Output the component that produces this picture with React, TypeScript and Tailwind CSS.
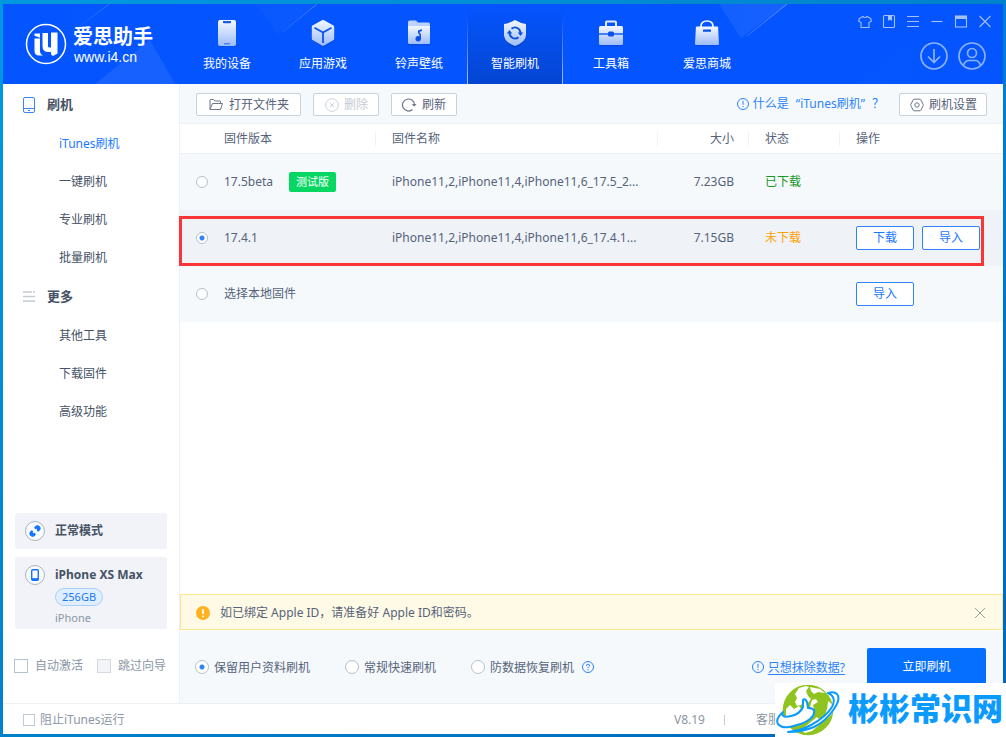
import React from "react";

type NavItem = { label: string; icon: React.ReactNode; active?: boolean };

function Gradient({ id }: { id: string }) {
  return (
    <linearGradient id={id} x1="0" y1="0" x2="0" y2="1">
      <stop offset="0" stopColor="#f4f8ff" />
      <stop offset="1" stopColor="#9dbcf9" />
    </linearGradient>
  );
}

const NAV: NavItem[] = [
  {
    label: "我的设备",
    icon: (
      <svg width="28" height="30" viewBox="0 0 28 30">
        <defs><Gradient id="g1" /></defs>
        <rect x="5.5" y="4" width="17" height="25" rx="2" fill="#0846cf" opacity=".5" />
        <rect x="5" y="2" width="18" height="26" rx="2" fill="url(#g1)" />
        <path d="M10 3h8v1.2l-1 1h-6l-1-1z" fill="#1a5ae8" />
        <rect x="11" y="25" width="6" height="1.5" fill="#4c82f2" />
      </svg>
    ),
  },
  {
    label: "应用游戏",
    icon: (
      <svg width="28" height="30" viewBox="0 0 28 30">
        <defs><Gradient id="g2" /></defs>
        <path d="M14 3.5 25.5 10v12L14 29.5 2.5 22V10z" fill="#0846cf" opacity=".5" />
        <path d="M15 2.2 24.5 7.500q.7.400.7 1.200v12q0 .8-.7 1.200L15 27.500q-1 .5-2 0L3.500 21.900q-.7-.4-.7-1.200v-12q0-.8.7-1.200L13 2.200q1-.5 2 0z" fill="url(#g2)" />
        <path d="M5.500 9.800 14 14.500l8.500-4.700M14 14.500V25" fill="none" stroke="#0b55ee" strokeWidth="1.8" />
      </svg>
    ),
  },
  {
    label: "铃声壁纸",
    icon: (
      <svg width="28" height="30" viewBox="0 0 28 30">
        <defs><Gradient id="g3" /></defs>
        <rect x="3" y="9" width="22" height="19" rx="1.5" fill="#0846cf" opacity=".5" />
        <path d="M3 7V4q0-1.500 1.500-1.500H11l2 2h10.500Q25 4.500 25 6v2H3z" fill="#bcd1fd" />
        <path d="M3 8h22v16.500q0 1.500-1.500 1.500h-19Q3 26 3 24.500z" fill="url(#g3)" />
        <circle cx="13.2" cy="20.800" r="2.700" fill="#0b50e6" />
        <path d="M15.200 21v-4.500q-2-2-1.500-3.500 2.500 0 2.800-1.500" fill="none" stroke="#0b50e6" strokeWidth="1.6" />
      </svg>
    ),
  },
  {
    label: "智能刷机",
    active: true,
    icon: (
      <svg width="28" height="30" viewBox="0 0 28 30">
        <defs><Gradient id="g4" /></defs>
        <path d="M14 4 25 8v10q0 7-11 12Q3 25 3 18V8z" fill="#0538ab" opacity=".5" />
        <path d="M14 2q5 3 11 4v11q0 7-11 11Q3 24 3 17V6q6-1 11-4z" fill="url(#g4)" />
        <path d="M10.500 10.800A5.400 5.400 0 0 1 19.400 15M17.500 19.200A5.400 5.400 0 0 1 8.600 15" fill="none" stroke="#0b4fde" strokeWidth="1.8" />
        <path d="M16.800 14.500h5.400l-2.700 3.400zM5.800 15.500h5.400l-2.700-3.400z" fill="#0b4fde" />
      </svg>
    ),
  },
  {
    label: "工具箱",
    icon: (
      <svg width="28" height="30" viewBox="0 0 28 30">
        <defs><Gradient id="g5" /></defs>
        <rect x="2" y="10" width="24" height="18.500" rx="1.5" fill="#0846cf" opacity=".5" />
        <path d="M9 8V4.500Q9 3.500 10 3.500h8q1 0 1 1V8" fill="none" stroke="#e4edff" strokeWidth="2" />
        <rect x="2" y="8" width="24" height="19" rx="1.5" fill="url(#g5)" />
        <path d="M2 16h24" stroke="#0b55ee" strokeWidth="1.4" />
        <rect x="11" y="13.500" width="6" height="5" rx="1.500" fill="#0b50e6" />
      </svg>
    ),
  },
  {
    label: "爱思商城",
    icon: (
      <svg width="28" height="30" viewBox="0 0 28 30">
        <defs><Gradient id="g6" /></defs>
        <path d="M2.500 11h23v17h-23z" fill="#0846cf" opacity=".5" />
        <path d="M8 10V8.500q0-5.500 6-5.500t6 5.500V10" fill="none" stroke="#f0f5ff" strokeWidth="1.700" />
        <path d="M4 8.500h20q1 0 1.100 1L26 25.500q0 1.500-1.500 1.500h-21Q2 27 2 25.500L2.900 9.500Q3 8.500 4 8.500z" fill="url(#g6)" />
        <rect x="10" y="11.500" width="8" height="2.200" rx=".5" fill="#0b50e6" />
      </svg>
    ),
  },
];

function Logo() {
  return (
    <a href="#" className="flex items-center gap-[6px] text-white">
      <svg width="42" height="42" viewBox="0 0 42 42">
        <circle cx="21" cy="21" r="19.500" fill="none" stroke="#fff" strokeWidth="1.500" />
        <path d="M9.500 10.500H15v4.200l-5.500-2zM9.500 15.500H15V28q0 3 3 4.500h-4q-4.500 0-4.500-5z" fill="#fff" />
        <path d="M17.500 10H23v13q0 1.500 1.500 1.500h1.500V9.500h6.500v21L28 33l-2-1.500V29h-2.500q-6 0-6-6z" fill="#fff" />
      </svg>
      <span className="flex flex-col gap-[3px] pt-[2px]">
        <span className="text-[20px] leading-[20px] font-bold">爱思助手</span>
        <span className="pl-px font-['Liberation_Sans',sans-serif] text-[14px] leading-[14px]">www.i4.cn</span>
      </span>
    </a>
  );
}

const WINDOW_CONTROLS: { label: string; drawing: React.ReactNode }[] = [
  { label: "皮肤", drawing: <path d="M5 2.500 1.200 4.500.8 7.500l2.200.8v5.200h8V8.300l2.200-.8-.4-3L9 2.500Q7 4.500 5 2.500z" /> },
  { label: "便签", drawing: <><rect x="1.500" y="1.500" width="11" height="12" rx="1" /><path d="M6.500 2v4l1.500-1 1.500 1V2z" fill="#b5cdff" /></> },
  { label: "菜单", drawing: <path d="M1 2.500h12M1 7.500h12M1 12.500h12" /> },
  { label: "最小化", drawing: <path d="M1.500 7.500h11" /> },
  { label: "最大化", drawing: <><rect x="1.500" y="2" width="11" height="11" /><path d="M1.500 3.500h11" strokeWidth="3" /></> },
  { label: "关闭", drawing: <path d="m1.500 2 11 11m0-11-11 11" /> },
];

function Header() {
  return (
    <header className="relative flex h-20 shrink-0 overflow-hidden bg-[#0455ff] text-white">
      <svg className="absolute inset-0 h-full w-full" aria-hidden="true">
        <defs>
          <linearGradient id="ray" x1="0" x2="1">
            <stop offset="0" stopColor="#fff" stopOpacity="0" />
            <stop offset="1" stopColor="#fff" stopOpacity=".07" />
          </linearGradient>
          <linearGradient id="ray2" x1="0" x2="1">
            <stop offset="0" stopColor="#fff" stopOpacity=".08" />
            <stop offset="1" stopColor="#fff" stopOpacity="0" />
          </linearGradient>
          <linearGradient id="edge" x1="1" y1="0" x2="0" y2="1">
            <stop offset="0" stopColor="#7ba6ff" stopOpacity=".8" />
            <stop offset="1" stopColor="#7ba6ff" stopOpacity="0" />
          </linearGradient>
        </defs>
        <path d="M36 0h70L66 31zM252 0h62l-38 31zM716 0h68l-46 34z" fill="url(#ray)" />
        <path d="M92 80 147 36 172 80zM855 80l52-44 40 44z" fill="url(#ray2)" />
        <path d="M106 0 72 26M314 0l-34 28M784 0l-40 32" stroke="url(#edge)" />
      </svg>
      <div className="relative flex w-44 items-center pl-[22px]"><Logo /></div>
      <nav className="relative flex">
        {NAV.map((item) => (
          <a
            key={item.label}
            href="#"
            className={
              item.active
                ? "flex w-24 flex-col items-center gap-[6px] border-x border-[#7ba5ff] bg-linear-to-b from-[#0455ff] to-[#0446d2] pt-[14px] text-xs leading-5 [border-image:linear-gradient(to_bottom,transparent_15%,#a9c5ff)_1]"
                : "flex w-24 flex-col items-center gap-[6px] pt-[14px] text-xs leading-5"
            }
          >
            {item.icon}
            {item.label}
          </a>
        ))}
      </nav>
      <div className="relative ml-auto flex flex-col items-end gap-[13px] pt-[10px]">
        <div className="flex gap-[10px] pr-[11px]">
          {WINDOW_CONTROLS.map((c) => (
            <button key={c.label} aria-label={c.label}>
              <svg className="block" width="14" height="15" viewBox="0 0 14 15" fill="none" stroke="#a3c0ff" strokeWidth="1.1">{c.drawing}</svg>
            </button>
          ))}
        </div>
        <div className="flex gap-[10px] pr-[17px]">
          <button aria-label="下载">
            <svg className="block" width="28" height="28" viewBox="0 0 28 28" fill="none" stroke="#8db2ff" strokeWidth="1.7">
              <circle cx="14" cy="14" r="13" /><path d="M14 7v13M8 14.500l6 6 6-6" />
            </svg>
          </button>
          <button aria-label="账户">
            <svg className="block" width="28" height="28" viewBox="0 0 28 28" fill="none" stroke="#8db2ff" strokeWidth="1.7">
              <circle cx="14" cy="14" r="13" /><circle cx="14" cy="11" r="4.500" /><path d="M5.500 23q2-4.500 5-4.500h7q3 0 5 4.500" />
            </svg>
          </button>
        </div>
      </div>
    </header>
  );
}

function SideGroup({ title, icon, items, current }: { title: string; icon: React.ReactNode; items: string[]; current?: string }) {
  return (
    <section>
      <h2 className="flex h-10 items-center gap-[11px] pl-[19px] text-[13px] font-bold text-[#465266]">{icon}{title}</h2>
      <ul>
        {items.map((item) => (
          <li key={item}>
            <a
              href="#"
              className={item === current ? "flex h-[38px] items-center pl-14 text-[#1a78ff]" : "flex h-[38px] items-center pl-14 text-[#465266]"}
            >
              {item}
            </a>
          </li>
        ))}
      </ul>
    </section>
  );
}

function Check({ label, small, disabled }: { label: string; small?: boolean; disabled?: boolean }) {
  return (
    <label className={small ? "flex items-center gap-[5px] text-[#8b96a6]" : "flex items-center gap-[7px] text-[#8b96a6]"}>
      <input
        type="checkbox"
        disabled={disabled}
        className={
          small
            ? "size-3 appearance-none border border-[#c0cad6] bg-white checked:bg-[#1a78ff]"
            : "size-[14px] appearance-none border border-[#b4c3d4] bg-white checked:bg-[#1a78ff] disabled:border-[#d5d9df] disabled:bg-[#f3f4f7]"
        }
      />
      {label}
    </label>
  );
}

function Sidebar() {
  return (
    <aside className="flex w-[177px] shrink-0 flex-col border-r border-[#edf0f4] bg-white pt-px">
      <SideGroup
        title="刷机"
        current="iTunes刷机"
        items={["iTunes刷机", "一键刷机", "专业刷机", "批量刷机"]}
        icon={
          <svg width="14" height="16" viewBox="0 0 14 16" fill="none" stroke="#3a86f7">
            <rect x="1.500" y=".5" width="11" height="15" rx="1.500" /><path d="M1.500 11.500h11M6 13.500h2" />
          </svg>
        }
      />
      <SideGroup
        title="更多"
        items={["其他工具", "下载固件", "高级功能"]}
        icon={
          <svg width="14" height="16" viewBox="0 0 14 16" stroke="#c5ccd5" strokeWidth="1.5">
            <path d="M1 3h9M11 3h2M1 7.500h12M1 12h12" />
          </svg>
        }
      />
      <div className="mt-auto flex flex-col gap-2 px-3 pb-7">
        <div className="flex h-9 items-center gap-[10px] rounded-[3px] bg-[#f2f3f8] pl-[10px] font-bold text-[#465266]">
          <svg width="20" height="20" viewBox="0 0 20 20" fill="none">
            <circle cx="10" cy="10" r="9.500" fill="#fafbfd" stroke="#a9b4c2" />
            <path d="M9.800 6.700q2.200-3.200 4.400-1t-1 4.400zM10.200 13.300q-2.200 3.200-4.400 1t1-4.400z" fill="#1474ff" stroke="#1474ff" strokeWidth="1.200" strokeLinejoin="round" />
            <path d="m8.200 11.800.9-.9M10.900 9.100l.9-.9" stroke="#fafbfd" strokeWidth="1.600" />
          </svg>
          正常模式
        </div>
        <div className="flex h-[72px] gap-[10px] rounded-[3px] bg-[#f2f3f8] pt-2 pl-[10px]">
          <svg width="20" height="20" viewBox="0 0 20 20" fill="none">
            <circle cx="10" cy="10" r="9.500" fill="#fafbfd" stroke="#a9b4c2" />
            <rect x="6.700" y="4.700" width="6.600" height="10.600" rx="1" stroke="#1474ff" strokeWidth="1.4" />
            <path d="M7 14.200h6" stroke="#1474ff" strokeWidth="2.200" />
          </svg>
          <div className="flex flex-col items-start">
            <strong className="leading-5 text-[#465266]">iPhone XS Max</strong>
            <span className="mt-[3px] flex h-[18px] items-center rounded-full border border-[#a9cffc] bg-[#dfefff] px-[6px] text-[11px] text-[#1a78ff]">256GB</span>
            <span className="mt-1 text-[11px] leading-4 text-[#8b96a6]">iPhone</span>
          </div>
        </div>
      </div>
      <div className="flex justify-between pr-[13px] pb-7 pl-[11px] leading-[18px]">
        <Check label="自动激活" />
        <Check label="跳过向导" disabled />
      </div>
    </aside>
  );
}

const toolButton = "flex h-[23px] items-center rounded-[2px] border border-[#c9d1db] bg-white pt-px text-[#56637a] disabled:text-[#c6ccd4]";

function InfoIcon({ question }: { question?: boolean }) {
  return (
    <svg width="12" height="12" viewBox="0 0 12 12" fill="none" stroke="#2d83f8">
      <circle cx="6" cy="6" r="5.500" />
      {question ? <path d="M4.300 4.800Q4.400 3.200 6 3.200t1.600 1.500Q7.600 5.500 6.600 6 6 6.400 6 7.300M6 8.300v1.200" /> : <path d="M6 2.800v4M6 8v1.200" />}
    </svg>
  );
}

function Toolbar() {
  return (
    <div className="flex h-[39px] shrink-0 items-center gap-3 bg-[#f5f9fc] pt-px pr-4 pl-4">
      <button className={`${toolButton} gap-[6px] pr-[11px] pl-3`}>
        <svg width="14" height="13" viewBox="0 0 14 13" fill="none" stroke="#6b7789">
          <path d="M1 11.500V2q0-.5.500-.5h3l1.500 1.500h5q.5 0 .5.500v2M1 11.500l2.500-6h10l-2 6z" />
        </svg>
        打开文件夹
      </button>
      <button disabled className={`${toolButton} gap-[5px] pr-[10px] pl-[11px]`}>
        <svg width="14" height="14" viewBox="0 0 14 14" fill="none" stroke="#ccd2da"><circle cx="7" cy="7" r="6.300" /><path d="m4.800 4.800 4.400 4.400m0-4.400L4.800 9.200" /></svg>
        删除
      </button>
      <button className={`${toolButton} gap-[5px] pr-[10px] pl-[9px]`}>
        <svg width="16" height="14" viewBox="0 0 16 14" fill="none" stroke="#6b7789" strokeWidth="1.2">
          <path d="M11.500 11.500A6 6 0 1 1 13.500 7" /><path d="M10.800 6h4.700l-2.300 2.800z" fill="#6b7789" stroke="none" />
        </svg>
        刷新
      </button>
      <a href="#" className="ml-auto flex items-center gap-1 pr-[3px] text-[#2d83f8]">
        <InfoIcon />
        <span>什么是<span className="pl-[7px]">“</span>iTunes刷机<span className="pr-[7px]">”</span>？</span>
      </a>
      <button className={`${toolButton} gap-[5px] pr-[9px] pl-[10px]`}>
        <svg width="14" height="14" viewBox="0 0 14 14" fill="none" stroke="#6b7789">
          <path d="M4 1.200h6q.5 0 .8.500L13.200 6.500q.2.500 0 1L10.800 12.300q-.3.500-.8.500H4q-.5 0-.8-.5L.8 7.500q-.2-.5 0-1L3.200 1.700q.3-.5.8-.5z" /><circle cx="7" cy="7" r="2.200" />
        </svg>
        刷机设置
      </button>
    </div>
  );
}

type Firmware = { version: string; beta?: boolean; name: string; size: string; status: string; statusClass: string; actions: string[]; selected?: boolean };

const FIRMWARE: Firmware[] = [
  { version: "17.5beta", beta: true, name: "iPhone11,2,iPhone11,4,iPhone11,6_17.5_2...", size: "7.23GB", status: "已下载", statusClass: "pl-4 text-[#16971f]", actions: [] },
  { version: "17.4.1", name: "iPhone11,2,iPhone11,4,iPhone11,6_17.4.1...", size: "7.15GB", status: "未下载", statusClass: "pl-4 text-[#ffa200]", actions: ["下载", "导入"], selected: true },
  { version: "选择本地固件", name: "", size: "", status: "", statusClass: "", actions: ["导入"] },
];

const radioBase =
  "block appearance-none rounded-full border border-[#b5bfcb] bg-white checked:bg-[radial-gradient(circle,#2d83f8_0_2px,white_3px)]";

function Heading({ children, right }: { children: React.ReactNode; right?: boolean }) {
  return (
    <span className={right ? "flex items-center justify-end border-r border-[#eff2f6] pr-[14px] pl-4 leading-[14px]" : "flex items-center border-r border-[#eff2f6] pl-4 leading-[14px]"}>
      {children}
    </span>
  );
}

function FirmwareTable() {
  return (
    <div className="relative">
      <table className="w-full table-fixed text-left text-[#56637a]">
        <colgroup>
          <col className="w-[44px]" /><col className="w-[152px]" /><col /><col className="w-[91px]" /><col className="w-[91px]" /><col className="w-[163px]" />
        </colgroup>
        <thead>
          <tr className="h-[30px] border-y border-[#edf1f5] bg-white">
            <th className="p-0" />
            <th className="p-0 font-normal"><span className="block border-r border-[#eff2f6] leading-[14px]">固件版本</span></th>
            <th className="p-0 font-normal"><Heading>固件名称</Heading></th>
            <th className="p-0 font-normal"><Heading right>大小</Heading></th>
            <th className="p-0 font-normal"><Heading>状态</Heading></th>
            <th className="p-0 pl-4 font-normal">操作</th>
          </tr>
        </thead>
        <tbody>
          {FIRMWARE.map((f) => (
            <tr key={f.version} className={f.selected ? "h-14 bg-[#eff2f7]" : "h-14 bg-[#f5f9fc]"}>
              <td className="pl-4"><input type="radio" name="firmware" aria-label={f.version} defaultChecked={f.selected} className={`${radioBase} size-3`} /></td>
              <td className="pt-px">
                <span className="flex items-center gap-4">
                  {f.version}
                  {f.beta && <span className="rounded-[2px] bg-[#06d763] px-[7px] text-[11px] leading-5 text-white">测试版</span>}
                </span>
              </td>
              <td className="truncate pt-px pl-4">{f.name}</td>
              <td className="pt-px pr-[15px] text-right">{f.size}</td>
              <td className={`pt-px ${f.statusClass}`}>{f.status}</td>
              <td className="pl-4">
                <span className="flex gap-2">
                  {f.actions.map((a) => (
                    <button key={a} className="h-6 w-[58px] rounded-[2px] border border-[#2d83f8] bg-white pt-px text-[#1a78ff]">{a}</button>
                  ))}
                </span>
              </td>
            </tr>
          ))}
        </tbody>
      </table>
      <div className="pointer-events-none absolute top-[93px] right-[19px] -left-px h-[50px] border-3 border-[#f93535]" />
    </div>
  );
}

function Notice() {
  return (
    <div className="mt-auto flex h-9 shrink-0 items-center gap-[10px] border border-[#ffe48f] bg-[#fffae6] pt-px pr-4 pl-[15px] text-[#56637a]">
      <svg width="14" height="14" viewBox="0 0 14 14"><circle cx="7" cy="7" r="7" fill="#ffb11f" /><path d="M7 3v5M7 9.500v1.700" stroke="#fff" strokeWidth="1.8" /></svg>
      如已绑定 Apple ID，请准备好 Apple ID和密码。
      <button aria-label="关闭提示" className="ml-auto">
        <svg width="12" height="12" viewBox="0 0 12 12" stroke="#9aa09f"><path d="m1 1 10 10M11 1 1 11" /></svg>
      </button>
    </div>
  );
}

function Options() {
  return (
    <div className="mt-px flex h-[72px] shrink-0 items-center bg-[#f5f9fc] pr-[17px] pl-[15px] text-[#56637a]">
      <div className="flex items-center gap-[35px]">
        {["保留用户资料刷机", "常规快速刷机", "防数据恢复刷机"].map((label, i) => (
          <label key={label} className="flex items-center gap-[5px]">
            <input type="radio" name="mode" defaultChecked={i === 0} className={`${radioBase} size-[14px]`} />
            <span className="pt-px">{label}</span>
          </label>
        ))}
      </div>
      <a href="#" aria-label="帮助" className="ml-2"><InfoIcon question /></a>
      <a href="#" className="mr-[22px] ml-auto flex items-center gap-1 text-[#2d83f8]"><InfoIcon /><span className="pt-px underline underline-offset-2">只想抹除数据?</span></a>
      <button className="h-[38px] w-[119px] rounded-[2px] bg-[#0570ff] text-white">立即刷机</button>
    </div>
  );
}

function Watermark() {
  return (
    <div className="absolute right-0 bottom-0 flex h-[54px] w-[231px] gap-2 bg-white pl-px">
      <svg width="64" height="54" viewBox="0 0 64 54" className="shrink-0">
        <circle cx="32" cy="27" r="24.500" fill="#8fc31f" stroke="#8fc31f" strokeWidth="1.500" />
        <path d="M23 5l7-2 3 1-3 4 2 5 3 3-3 4-4-2-3 4-4 1-2-4 2-4-2-4zM34 4l10 2 5 4-7-1-4 2-3-3zM10 26l4-4 4 4 5-3 2 3-7 8-8 3zM36 17l4-1 2 3-5 3 1 5-4-3zM36 38l5-4 3 3-2 6-6 5-7 2-4-3z" fill="#fff" />
        <path d="M52 18l4 3v10l-4 4-3-3 2-6z" fill="#fff" opacity=".9" />
        <path d="M7 29Q-1 36 2 41q5 6 19 1 8-2 13-6 5-4 4-9-2-2-6-2l-1-6q-2-4-4-2v7q-3 7-12 9Q7 35 6 31z" fill="#fff" stroke="#0b9bff" strokeWidth="2" strokeLinejoin="round" />
        <path d="M52 10q6-2 9 1 4 5-3 15-8 12-20 18-12 5-26 5 12-1 23-7 15-8 21-18 5-10-4-14z" fill="#fff" stroke="#0b9bff" strokeWidth="2" strokeLinejoin="round" />
      </svg>
      <span className="text-[31px] leading-[51px] font-black whitespace-nowrap text-[#0b9bff]">彬彬常识网</span>
    </div>
  );
}

export default function App() {
  return (
    <div className="relative flex min-h-screen flex-col bg-linear-to-br from-[#0099e0] via-[#0082cb] to-[#0064bd] px-[3px] pt-1 pb-[3px] font-['Noto_Sans','Noto_Sans_CJK_SC',sans-serif] text-xs">
      <div className="flex flex-1 flex-col bg-white">
        <Header />
        <div className="flex flex-1">
          <Sidebar />
          <main className="flex min-w-0 flex-1 flex-col">
            <Toolbar />
            <FirmwareTable />
            <Notice />
            <Options />
          </main>
        </div>
        <footer className="flex h-[31px] shrink-0 items-center border-t border-[#edf0f4] pt-px pr-[199px] pl-5 text-[#8b96a6]">
          <Check label="阻止iTunes运行" small />
          <span className="ml-auto">V8.19</span>
          <span className="mx-[19px] h-[10px] w-px bg-[#c0c8d2]" />
          <a href="#" className="pl-3">客服中心</a>
        </footer>
      </div>
      <Watermark />
    </div>
  );
}
